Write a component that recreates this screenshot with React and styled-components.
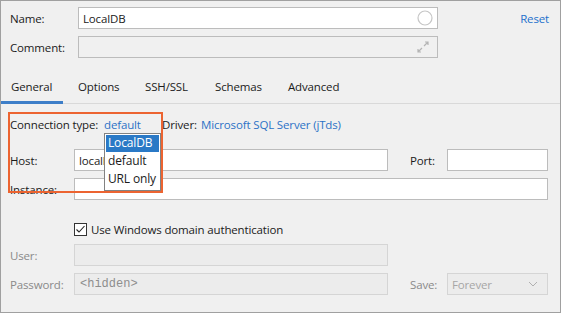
import styled, { createGlobalStyle } from 'styled-components';

const GlobalStyle = createGlobalStyle`
  body {
    margin: 0;
    background: #ffffff;
  }
`

const Window = styled.div`
  position: relative;
  width: 561px;
  height: 313px;
  box-sizing: border-box;
  border: 1px solid #a0a0a0;
  background: #f0f0f0;
  font-family: "Open Sans", "Noto Sans", sans-serif;
  font-size: 11.5px;
  letter-spacing: -0.15px;
  color: #1b1b1b;
  display: flex;
  flex-direction: column;
`

const Header = styled.div`
  display: flex;
  flex-direction: column;
  gap: 7px;
  padding: 6px 11px 0 9px;
`

const Row = styled.div`
  display: flex;
  align-items: center;
  height: ${props => props.height || '22px'};
  margin-top: ${props => props.top || '0'};
  padding-left: ${props => props.indent || '0'};
`

const Label = styled.span`
  width: ${props => props.width || 'auto'};
  flex-shrink: 0;
  color: ${props => props.disabled ? '#8a8a8a' : '#1b1b1b'};
  margin-left: ${props => props.left || '0'};
`

const Field = styled.div`
  position: relative;
  display: flex;
  align-items: center;
  box-sizing: border-box;
  width: ${props => props.width};
  height: 22px;
  padding: 0 4px;
  border: 1px solid ${props => props.disabled ? '#d5d5d5' : '#bcbcbc'};
  background: ${props => props.disabled ? '#ececec' : props.flat ? '#f0f0f0' : '#ffffff'};
  color: ${props => props.disabled ? '#a6a6a6' : '#1b1b1b'};
`

const FieldIcon = styled.svg`
  margin-left: auto;
  flex-shrink: 0;
`

const Mono = styled.span`
  font-family: "Liberation Mono", monospace;
  font-size: 12px;
  letter-spacing: 0;
  color: #8e8e8e;
  padding-left: 1px;
`

const Link = styled.span`
  position: relative;
  flex-shrink: 0;
  width: ${props => props.width || 'auto'};
  color: #2c72c6;
  cursor: pointer;
`

const ResetLink = styled(Link)`
  margin-left: auto;
  color: #2470cc;
`

const TabBar = styled.div`
  display: flex;
  margin-top: 14px;
  height: 31px;
  border-bottom: 1px solid #d9d9d9;
`

const Tab = styled.div`
  box-sizing: border-box;
  width: ${props => props.width};
  height: 32px;
  line-height: 30px;
  padding-left: 10px;
  margin-right: ${props => props.gap || '0'};
  margin-bottom: -1px;
  border-bottom: 3px solid ${props => props.active ? '#3d7ec8' : 'transparent'};
  color: #1b1b1b;
`

const Body = styled.div`
  display: flex;
  flex-direction: column;
  padding: 0 10px 0 9px;
`

const Popup = styled.div`
  position: absolute;
  top: calc(100% + 1px);
  left: 0;
  width: 57px;
  box-sizing: border-box;
  padding: 1px;
  border: 1px solid #828282;
  background: #ffffff;
  font-size: 12px;
  z-index: 2;
`

const PopupItem = styled.div`
  height: 17px;
  line-height: 16px;
  padding-left: 2px;
  margin-bottom: 1px;
  color: ${props => props.selected ? '#ffffff' : '#1b1b1b'};
  background: ${props => props.selected ? '#2a79c6' : 'transparent'};
  white-space: nowrap;
`

const Checkbox = styled.span`
  display: flex;
  align-items: center;
  justify-content: center;
  width: 13px;
  height: 13px;
  box-sizing: border-box;
  border: 1px solid #333333;
  background: #ffffff;
  margin-right: 4px;
`

const Highlight = styled.div`
  position: absolute;
  left: 7px;
  top: 111px;
  width: 155px;
  height: 81px;
  box-sizing: border-box;
  border: 2px solid #ec6431;
  pointer-events: none;
`

const tabs = [
    {name: 'General', width: '62px', gap: '5px', active: true},
    {name: 'Options', width: '67px'},
    {name: 'SSH/SSL', width: '70px'},
    {name: 'Schemas', width: '73px'},
    {name: 'Advanced', width: 'auto'},
]

function App() {
    return (
        <>
            <GlobalStyle/>
            <Window>
                <Header>
                    <Row>
                        <Label width="68px">Name:</Label>
                        <Field width="360px">
                            LocalDB
                            <FieldIcon width="16" height="16" viewBox="0 0 16 16">
                                <circle cx="8" cy="8" r="7" fill="none" stroke="#c6c6c6" strokeWidth="1.2"/>
                            </FieldIcon>
                        </Field>
                        <ResetLink>Reset</ResetLink>
                    </Row>
                    <Row>
                        <Label width="68px">Comment:</Label>
                        <Field width="360px" flat>
                            <FieldIcon width="14" height="14" viewBox="0 0 14 14" style={{marginRight: '3px'}}>
                                <path d="M8 6 L12 2 M9 2 H12 V5" fill="none" stroke="#b4b4b4" strokeWidth="1.2"/>
                                <path d="M6 8 L2 12 M2 9 V12 H5" fill="none" stroke="#b4b4b4" strokeWidth="1.2"/>
                            </FieldIcon>
                        </Field>
                    </Row>
                </Header>

                <TabBar>
                    {tabs.map(t => (
                        <Tab key={t.name} active={t.active} width={t.width} gap={t.gap}>{t.name}</Tab>
                    ))}
                </TabBar>

                <Body>
                    <Row height="16px" top="12px">
                        <Label width="94px">Connection type:</Label>
                        <Link width="58px">
                            default
                            <Popup>
                                <PopupItem selected>LocalDB</PopupItem>
                                <PopupItem>default</PopupItem>
                                <PopupItem>URL only</PopupItem>
                            </Popup>
                        </Link>
                        <Label width="39px">Driver:</Label>
                        <Link>Microsoft SQL Server (jTds)</Link>
                    </Row>
                    <Row top="17px">
                        <Label width="64px">Host:</Label>
                        <Field width="314px">localhost</Field>
                        <Label width="37px" left="22px">Port:</Label>
                        <Field width="101px"/>
                    </Row>
                    <Row top="7px">
                        <Label width="64px">Instance:</Label>
                        <Field width="474px"/>
                    </Row>
                    <Row height="16px" top="21px" indent="64px">
                        <Checkbox>
                            <svg width="11" height="11" viewBox="0 0 11 11">
                                <path d="M1.5 5.5 L4 8 L9.5 2" fill="none" stroke="#222" strokeWidth="1.1"/>
                            </svg>
                        </Checkbox>
                        Use Windows domain authentication
                    </Row>
                    <Row top="7px">
                        <Label width="64px" disabled>User:</Label>
                        <Field width="314px" disabled/>
                    </Row>
                    <Row top="7px">
                        <Label width="64px" disabled>Password:</Label>
                        <Field width="314px" disabled><Mono>&lt;hidden&gt;</Mono></Field>
                        <Label width="37px" left="22px" disabled>Save:</Label>
                        <Field width="101px" disabled>
                            Forever
                            <FieldIcon width="10" height="6" viewBox="0 0 10 6" style={{marginRight: '5px'}}>
                                <path d="M1 1 L5 5 L9 1" fill="none" stroke="#b0b0b0" strokeWidth="1"/>
                            </FieldIcon>
                        </Field>
                    </Row>
                </Body>

                <Highlight/>
            </Window>
        </>
    );
}

export default App;
